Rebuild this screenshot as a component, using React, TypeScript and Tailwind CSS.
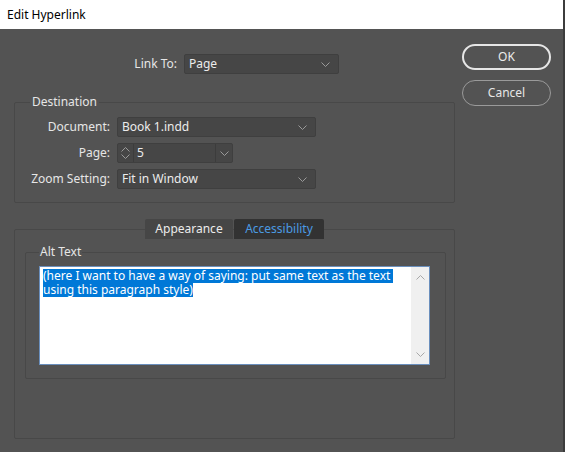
import type { ReactNode } from "react";

const FONT = { fontFamily: '"Noto Sans", "Open Sans", sans-serif' };

function Chevron({ up = false, className = "" }: { up?: boolean; className?: string }) {
  return (
    <svg width="9" height="5" viewBox="0 0 9 5" className={className}>
      <polyline
        points={up ? "0.5,4.5 4.5,0.5 8.5,4.5" : "0.5,0.5 4.5,4.5 8.5,0.5"}
        fill="none"
        stroke="currentColor"
        strokeWidth="1"
      />
    </svg>
  );
}

function Dropdown({ value, width }: { value: string; width: string }) {
  return (
    <div
      className={`${width} flex h-[20px] items-center justify-between rounded-[2px] border border-[#3f3f3f] bg-[#464646] pl-[4px] pr-[8px] text-[12px] text-[#ececec]`}
    >
      <span>{value}</span>
      <Chevron className="text-[#9a9a9a]" />
    </div>
  );
}

function Row({ label, children }: { label: string; children: ReactNode }) {
  return (
    <div className="flex h-[20px] items-center">
      <span className="w-[102px] pr-[7px] text-right text-[12px] text-[#e6e6e6]">{label}</span>
      {children}
    </div>
  );
}

export default function App() {
  return (
    <div className="h-[456px] w-[565px] overflow-hidden bg-white" style={FONT}>
      {/* title bar */}
      <div className="flex h-[29px] items-center border-r-2 border-[#3c3c3c] bg-white pl-[7px] text-[12px] text-black">
        Edit Hyperlink
      </div>

      {/* dialog body */}
      <div className="flex h-[423px] border-r-2 border-[#3c3c3c] bg-[#535353]">
        <div className="w-[462px] pl-[14px]">
          {/* link to */}
          <div className="mt-[25px] flex h-[20px] items-center">
            <span className="w-[170px] pr-[7px] text-right text-[12px] text-[#e6e6e6]">Link To:</span>
            <Dropdown value="Page" width="w-[155px]" />
          </div>

          {/* destination */}
          <fieldset className="mt-[20px] w-[441px] rounded-[2px] border border-[#484848] pb-[13px] pt-[7px]">
            <legend className="ml-[15px] px-[2px] text-[12px] leading-[16px] text-[#e6e6e6]">Destination</legend>
            <div className="flex flex-col gap-[6px]">
              <Row label="Document:">
                <Dropdown value="Book 1.indd" width="w-[199px]" />
              </Row>
              <Row label="Page:">
                <div className="flex h-[20px] w-[116px] rounded-[2px] border border-[#3f3f3f] bg-[#464646]">
                  <div className="flex w-[16px] flex-col items-center justify-center gap-[2px] border-r border-[#3c3c3c] text-[#9a9a9a]">
                    <Chevron up />
                    <Chevron />
                  </div>
                  <div className="flex flex-1 items-center pl-[3px] text-[12px] text-[#ececec]">5</div>
                  <div className="flex w-[17px] items-center justify-center border-l border-[#3c3c3c] text-[#9a9a9a]">
                    <Chevron />
                  </div>
                </div>
              </Row>
              <Row label="Zoom Setting:">
                <Dropdown value="Fit in Window" width="w-[199px]" />
              </Row>
            </div>
          </fieldset>

          {/* tabs */}
          <div className="relative z-10 mt-[16px] flex h-[20px] pl-[131px] text-[12px]">
            <div className="flex w-[88px] items-center justify-center rounded-t-[2px] bg-[#464646] text-[#ececec]">
              Appearance
            </div>
            <div className="ml-[1px] flex w-[90px] items-center justify-center rounded-t-[2px] bg-[#323232] text-[#4b9be3]">
              Accessibility
            </div>
          </div>
          <div className="mt-[-10px] h-[210px] w-[441px] rounded-[2px] border border-[#484848] pl-[10px] pt-[14px]">
            <fieldset className="w-[421px] rounded-[2px] border border-[#484848] pb-[13px] pl-[13px] pt-[6px]">
              <legend className="ml-0 px-[1px] text-[12px] leading-[16px] text-[#e6e6e6]">Alt Text</legend>
              <div className="flex h-[99px] w-[391px] border border-[#6a8fbd] bg-white">
                <div className="flex flex-1 flex-col items-start pl-[3px] pt-[2px] text-[12px] text-white">
                  <span className="h-[14px] whitespace-pre bg-[#0078d7] leading-[14px]">
                    (here I want to have a way of saying: put same text as the text{" "}
                  </span>
                  <span className="h-[14px] whitespace-pre bg-[#0078d7] leading-[14px]">using this paragraph style)</span>
                </div>
                <div className="flex w-[18px] flex-col items-center justify-between bg-[#f0f0f0] pb-[7px] pt-[8px] text-[#a8a8a8]">
                  <Chevron up />
                  <Chevron />
                </div>
              </div>
            </fieldset>
          </div>
        </div>

        {/* buttons */}
        <div className="flex flex-col gap-[10px] pt-[15px]">
          <button className="h-[26px] w-[89px] rounded-full border-2 border-[#e6e6e6] text-[12px] text-[#ececec]">
            OK
          </button>
          <button className="h-[26px] w-[89px] rounded-full border border-[#9a9a9a] text-[12px] text-[#e6e6e6]">
            Cancel
          </button>
        </div>
      </div>
    </div>
  );
}
